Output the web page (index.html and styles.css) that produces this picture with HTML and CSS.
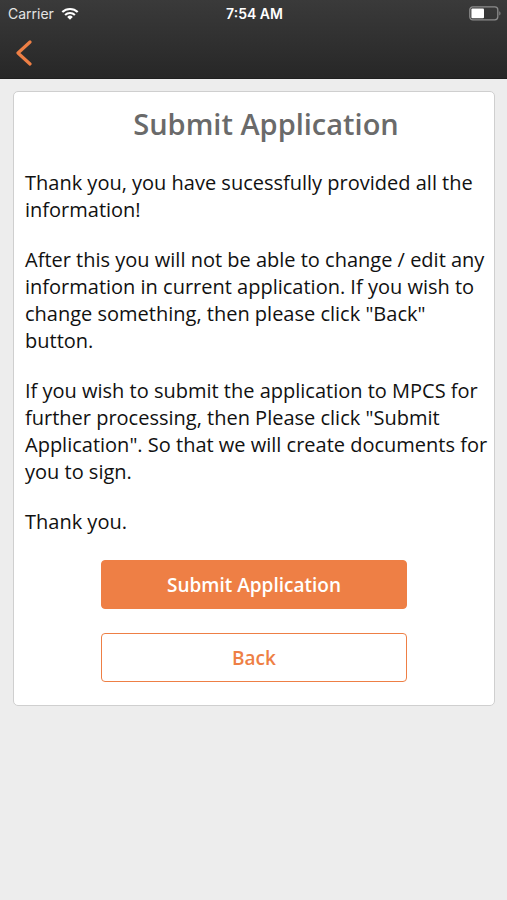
FILE: index.html
```html
<!DOCTYPE html>
<html lang="en">
<head>
<meta charset="utf-8">
<meta name="viewport" content="width=device-width, initial-scale=1">
<title>Submit Application</title>
<link rel="stylesheet" href="styles.css">
</head>
<body>
<header class="topbar">
  <div class="status">
    <div class="carrier">
      <span>Carrier</span>
      <svg class="wifi" viewBox="0 0 18 13" aria-hidden="true">
        <path d="M1.3 5.1a11 11 0 0 1 15.4 0M4.1 8a7 7 0 0 1 9.8 0" fill="none" stroke="#fff" stroke-width="2.1"/>
        <path d="M9 12.8 6.2 9.9a4 4 0 0 1 5.6 0z" fill="#fff"/>
      </svg>
    </div>
    <span class="time">7:54 AM</span>
    <svg class="battery" viewBox="0 0 32 15" aria-hidden="true">
      <rect x="0.8" y="0.8" width="28" height="13" rx="3" fill="none" stroke="#8c8c8c" stroke-width="1.3"/>
      <rect x="2.4" y="2.4" width="12.6" height="9.8" rx="1" fill="#fff"/>
      <path d="M30.3 5.2c1.6.7 1.6 3.6 0 4.3z" fill="#8c8c8c"/>
    </svg>
  </div>
  <nav class="nav">
    <button class="chevron" type="button" aria-label="Go back">
      <svg viewBox="0 0 16 26" aria-hidden="true">
        <path d="M14 2 2 13l12 11" fill="none" stroke="#ee7f45" stroke-width="3.2" stroke-linecap="round" stroke-linejoin="round"/>
      </svg>
    </button>
  </nav>
</header>
<main class="card">
  <h1>Submit Application</h1>
  <div class="copy">
    <p>Thank you, you have sucessfully provided all the information!</p>
    <p>After this you will not be able to change / edit any information in current application. If you wish to change something, then please click "Back" button.</p>
    <p>If you wish to submit the application to MPCS for further processing, then Please click "Submit Application". So that we will create documents for you to sign.</p>
    <p>Thank you.</p>
  </div>
  <div class="actions">
    <button class="btn btn-primary" type="button">Submit Application</button>
    <button class="btn btn-outline" type="button">Back</button>
  </div>
</main>
</body>
</html>
```
FILE: styles.css
```css
* {
  box-sizing: border-box;
}

body {
  margin: 0;
  min-height: 100vh;
  background: #ededed;
  color: #111;
  font-family: "Open Sans", "Noto Sans", sans-serif;
}

.topbar {
  height: 79px;
  background: linear-gradient(#3a3a3a, #272727);
  border-bottom: 1px solid #1f1f1f;
}

.status {
  display: grid;
  grid-template-columns: 1fr auto 1fr;
  align-items: center;
  height: 27px;
  padding: 0 6px 0 8px;
  color: #fff;
  font: 14px/27px Inter, sans-serif;
}

.carrier {
  display: flex;
  align-items: center;
  gap: 7px;
  color: #e4e4e4;
}

.wifi {
  width: 18px;
  height: 13px;
}

.time {
  font-weight: 600;
}

.battery {
  width: 32px;
  height: 15px;
  justify-self: end;
}

.nav {
  display: flex;
  align-items: center;
  height: 51px;
  padding-left: 16px;
}

.chevron {
  padding: 0;
  border: 0;
  background: none;
}

.chevron svg {
  display: block;
  width: 16px;
  height: 26px;
}

.card {
  margin: 12px 12px 0 13px;
  padding: 12px 0 23px;
  background: #fff;
  border: 1px solid #cfcfcf;
  border-radius: 5px;
}

h1 {
  margin: 0 0 25px;
  padding-left: 24px;
  color: #6a6a6a;
  font-size: 29px;
  font-weight: 600;
  line-height: 40px;
  text-align: center;
}

.copy {
  display: flex;
  flex-direction: column;
  gap: 23px;
  padding: 0 4px 0 11px;
  font-size: 20px;
  line-height: 27px;
}

.copy p {
  margin: 0;
}

.actions {
  display: flex;
  flex-direction: column;
  align-items: center;
  gap: 24px;
  margin-top: 25px;
  padding: 0 12px;
}

.btn {
  width: 67%;
  height: 49px;
  padding: 0;
  border: 1px solid #ee7f45;
  border-radius: 4px;
  font: 600 19px/26px "Open Sans", "Noto Sans", sans-serif;
}

.btn-primary {
  background: #ee7f45;
  color: #fff;
}

.btn-outline {
  background: #fff;
  color: #ee7f45;
}
```
